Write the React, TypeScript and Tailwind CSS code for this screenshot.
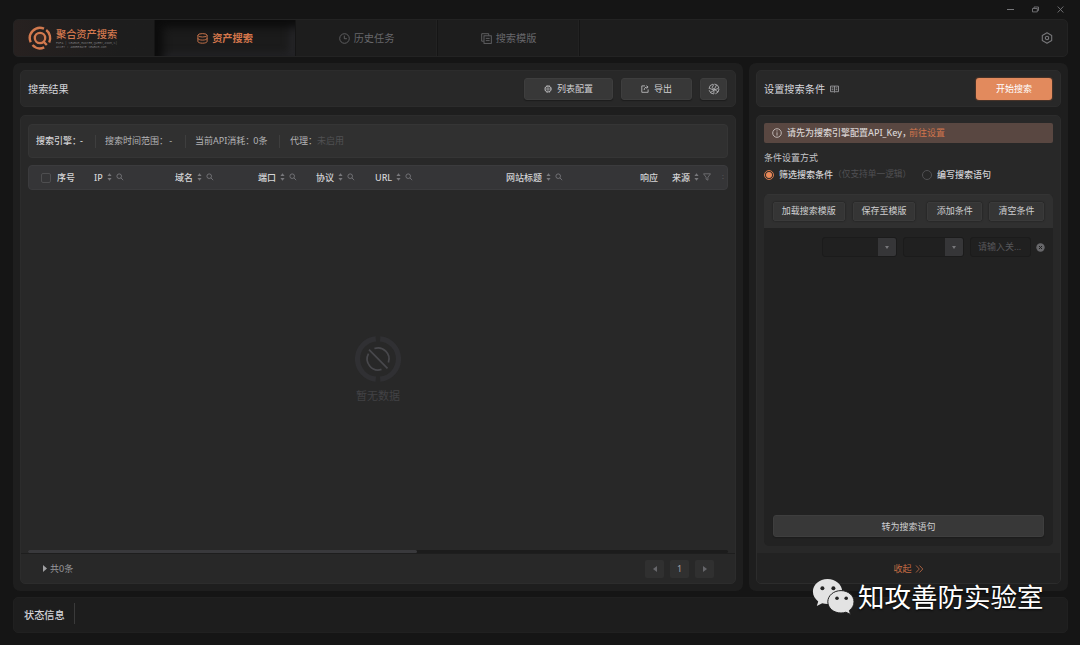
import React from 'react';

const sort = (
  <svg width="5" height="8" viewBox="0 0 5 8" fill="#77777b" className="-mt-px shrink-0">
    <path d="M2.5 0.2 4.6 3H.4zM2.5 7.8 4.6 5H.4z" />
  </svg>
);

const magnifier = (
  <svg width="8" height="8" viewBox="0 0 8 8" fill="none" stroke="#77777b" strokeWidth="0.9" className="-mt-px shrink-0">
    <circle cx="3.2" cy="3.2" r="2.3" />
    <path d="M4.9 4.9 7.2 7.1" />
  </svg>
);

const funnel = (
  <svg width="8" height="8" viewBox="0 0 8 8" fill="none" stroke="#77777b" strokeWidth="0.8" className="-mt-px shrink-0">
    <path d="M.5.8h7L4.9 4.2v3L3.1 6.2v-2z" />
  </svg>
);

function Logo() {
  return (
    <svg width="24" height="24" viewBox="0 0 24 24" fill="none" stroke="#d2794e" className="shrink-0">
      <circle cx="12" cy="12" r="5.2" strokeWidth="2.3" fill="#3a2822" />
      <path d="M15 15.2l3.8 3.8" strokeWidth="2.4" />
      <path d="M2.7 16.2A10.2 10.2 0 0 1 16 2.7" strokeWidth="2.4" />
      <path d="M18.2 4A10.2 10.2 0 0 1 21.2 16.4" strokeWidth="2.4" />
      <path d="M4.5 19A10.2 10.2 0 0 0 16.2 21.3" strokeWidth="2.4" />
    </svg>
  );
}

function Database() {
  return (
    <svg width="11" height="11" viewBox="0 0 11 11" fill="none" stroke="#d4794e" strokeWidth="0.9">
      <ellipse cx="5.5" cy="2.3" rx="4.6" ry="1.7" />
      <path d="M.9 2.3v6.2c0 .9 2 1.7 4.6 1.7s4.6-.8 4.6-1.7V2.3M.9 5.4c0 .9 2 1.7 4.6 1.7s4.6-.8 4.6-1.7" />
    </svg>
  );
}

function Clock() {
  return (
    <svg width="11" height="11" viewBox="0 0 11 11" fill="none" stroke="#646467" strokeWidth="0.9">
      <circle cx="5.5" cy="5.5" r="4.8" />
      <path d="M5.3 2.6v3.1h2.6" />
    </svg>
  );
}

function Template() {
  return (
    <svg width="11" height="11" viewBox="0 0 11 11" fill="none" stroke="#646467" strokeWidth="0.9">
      <path d="M2.8 8.2H.7V.7h7v1.8" />
      <rect x="3" y="2.8" width="7.3" height="7.6" />
      <path d="M4.8 5.4h3.8M4.8 7.6h3.8" />
    </svg>
  );
}

function HexGear({ size, color, width }: { size: number; color: string; width: number }) {
  return (
    <svg width={size} height={size} viewBox="0 0 12 12" fill="none" stroke={color} strokeWidth={width}>
      <path d="M6 .8 10.7 3.4v5.2L6 11.2 1.3 8.6V3.4z" strokeLinejoin="round" />
      <circle cx="6" cy="6" r="1.7" />
    </svg>
  );
}

function SmallGear() {
  return (
    <svg width="8" height="8" viewBox="0 0 8 8" fill="none" stroke="#b4b4b6">
      <circle cx="4" cy="4" r="3.1" strokeWidth="1.1" strokeDasharray="1.9 .53" />
      <circle cx="4" cy="4" r="2.8" strokeWidth="0.5" />
      <circle cx="4" cy="4" r="1.2" strokeWidth="0.8" />
    </svg>
  );
}

function ExportIcon() {
  return (
    <svg width="8" height="8" viewBox="0 0 8 8" fill="none" stroke="#b8b8ba" strokeWidth="0.9">
      <path d="M4 .9H.8v6.4h6.3V4.4" />
      <path d="M3.2 5c0-2 1-2.9 3.4-2.9M5.5.6l1.6 1.5-1.6 1.4" />
    </svg>
  );
}

function Globe() {
  return (
    <svg width="12" height="12" viewBox="0 0 12 12" fill="none" stroke="#b0b0b2" strokeWidth="0.9">
      <circle cx="6" cy="6" r="5" strokeDasharray="6.2 1.65" />
      <path d="M1.2 5.2 6 7.1l4.8-1.9M6 1.1l-2 3.6 6 4.2M8.5 2 5.9 7.1v3.8M2.6 9.5 6 7.1" />
    </svg>
  );
}

function Book() {
  return (
    <svg width="9" height="8" viewBox="0 0 9 8" fill="none" stroke="#a6a6a9" strokeWidth="0.8">
      <path d="M4.5 1.1H.5v5.6h3.3l.7.6.7-.6h3.3V1.1zM4.5 1.1v5.8M1.7 2.9h1.6M1.7 4.7h1.6M5.7 2.9h1.6M5.7 4.7h1.6" />
    </svg>
  );
}

function Tab({ icon, label, active = false }: { icon: React.ReactNode; label: string; active?: boolean }) {
  return (
    <div
      className={
        active
          ? 'flex w-[142px] items-center justify-center gap-1 border-x border-x-[#151515] bg-[#1b1b1b] text-[10.2px] font-bold text-[#d4764b] shadow-[inset_8px_7px_9px_#0c0c0c,inset_-6px_-3px_7px_#242427]'
          : 'flex w-[142px] items-center justify-center gap-1 border-r border-r-[#151515] text-[10.2px] text-[#67676b] shadow-[inset_-1px_0_0_#222222]'
      }
    >
      {icon}
      <span className="pt-[2px]">{label}</span>
    </div>
  );
}

type Column = { label: string; width: string; tools?: 'search' | 'filter' };

const columns: Column[] = [
  { label: '序号', width: 'w-[37px]' },
  { label: 'IP', width: 'w-[81px]', tools: 'search' },
  { label: '域名', width: 'w-[83px]', tools: 'search' },
  { label: '端口', width: 'w-[58px]', tools: 'search' },
  { label: '协议', width: 'w-[59px]', tools: 'search' },
  { label: 'URL', width: 'w-[131px]', tools: 'search' },
  { label: '网站标题', width: 'w-[134px]', tools: 'search' },
  { label: '响应', width: 'w-[32px]' },
  { label: '来源', width: 'w-[50px]', tools: 'filter' },
];

const card = 'rounded-[5px] border border-[#2c2c2c] bg-[#282828]';
const button = 'flex items-center justify-center rounded-[3px] border border-[#3e3e3e] bg-[#383838] text-[9px] text-[#d0d0d2] shadow-[0_1px_1px_#1c1c1c]';

function Divider() {
  return <div className="h-[13px] w-px shrink-0 bg-[#3e3e3e]" />;
}

function Results() {
  return (
    <section className="flex w-[730px] flex-col gap-2 rounded-[7px] bg-[#1e1e1e] p-[7px]">
      <div className={`${card} flex h-[37px] shrink-0 items-center pr-2 pl-[7px]`}>
        <h2 className="flex-1 pt-[2px] text-[10.2px] text-[#d6d6dc]">搜索结果</h2>
        <div className="flex gap-2">
          <button className={`${button} h-[22px] w-[89px] gap-[5px]`}><SmallGear />列表配置</button>
          <button className={`${button} h-[22px] w-[71px] gap-[5px]`}><ExportIcon />导出</button>
          <button className={`${button} h-[22px] w-[27px]`}><Globe /></button>
        </div>
      </div>

      <div className={`${card} flex flex-1 flex-col`}>
        <div className="mx-[7px] mt-2 flex h-[34px] items-center rounded-[4px] border border-[#353535] bg-[#303030] pl-[7px] text-[9px] whitespace-nowrap text-[#b4b4b6]">
          <span className="w-[59px] font-medium text-[#d2d2d4]">搜索引擎：<span className="-ml-px">-</span></span>
          <Divider />
          <span className="w-[89px] pl-[9px]">搜索时间范围： <span className="-ml-px">-</span></span>
          <Divider />
          <span className="flex w-[93px] pl-[9px]">当前API消耗：<span className="-ml-px">0条</span></span>
          <Divider />
          <span className="flex pl-[10px]">代理：<span className="text-[#515153]">未启用</span></span>
        </div>

        <div className="mx-[7px] mt-[7px] flex h-[25px] items-center rounded-[4px] border border-[#3b3b3d] bg-[#353537] pl-3 text-[9px] font-medium whitespace-nowrap text-[#d4d4d6]">
          <span className="mr-[6px] size-[10px] shrink-0 rounded-[2px] border border-[#4e4e50]" />
          {columns.map((c) => (
            <span key={c.label} className={`${c.width} flex shrink-0 items-center gap-1`}>
              {c.label}
              {c.tools && sort}
              {c.tools === 'search' && magnifier}
              {c.tools === 'filter' && funnel}
            </span>
          ))}
          <span className="text-[7px] text-[#5a5a5c]">:</span>
        </div>

        <div className="flex flex-1 flex-col items-center pt-[146px]">
          <svg width="46" height="46" viewBox="0 0 46 46" fill="none">
            <path d="M20.8 2.8a20.3 20.3 0 0 0 0 40.4M25.2 2.8a20.3 20.3 0 0 1 0 40.4" stroke="#303033" strokeWidth="5.2" />
            <path d="M19.4 12.5A11 11 0 0 1 33.4 26.4M13.5 17.7A11 11 0 0 0 26.5 33.4M14 13.6 32.5 32.3" stroke="#48484c" strokeWidth="1.7" />
          </svg>
          <span className="mt-[6px] text-[11px] leading-4 text-[#424245]">暂无数据</span>
        </div>

        <div className="mx-[7px] h-[3px] shrink-0 rounded-full bg-[#1c1c1c]">
          <div className="h-[3px] w-[389px] rounded-full bg-[#39393c]" />
        </div>
        <footer className="flex h-[30px] shrink-0 items-center border-t border-[#1e1e1e] pr-[21px] pl-[22px] text-[9px] text-[#97979a]">
          <svg width="4" height="7" viewBox="0 0 4 7" className="mr-[3px] fill-[#a0a0a2]"><path d="M0 0 4 3.5 0 7z" /></svg>
          <span className="flex-1 pt-px">共0条</span>
          <div className="flex gap-[6px]">
            <span className="flex h-[18px] w-[19px] items-center justify-center rounded-[2px] bg-[#303030]">
              <svg width="4" height="6" viewBox="0 0 4 6" fill="#66666a"><path d="M4 0v6L0 3z" /></svg>
            </span>
            <span className="flex h-[18px] w-[19px] items-center justify-center rounded-[2px] bg-[#303030] pt-px text-[9px] text-[#a0a0a8]">1</span>
            <span className="flex h-[18px] w-[19px] items-center justify-center rounded-[2px] bg-[#303030]">
              <svg width="4" height="6" viewBox="0 0 4 6" fill="#66666a"><path d="M0 0v6l4-3z" /></svg>
            </span>
          </div>
        </footer>
      </div>
    </section>
  );
}

function Select({ width }: { width: string }) {
  return (
    <div className={`${width} flex h-5 overflow-hidden rounded-[3px] border border-[#1b1b1b] bg-[#202020]`}>
      <span className="flex-1" />
      <span className="flex w-[18px] items-center justify-center bg-[#363638]">
        <svg width="4" height="3" viewBox="0 0 4 3" fill="#77777a"><path d="M0 0h4L2 3z" /></svg>
      </span>
    </div>
  );
}

function Conditions() {
  const small = 'flex h-[19px] items-center justify-center rounded-[2px] border border-[#3a3a3a] bg-[#353535] shadow-[0_0_2px_#1a1a1a]';
  return (
    <section className="flex w-[319px] flex-col gap-2 rounded-[7px] bg-[#1e1e1e] p-[7px]">
      <div className={`${card} flex h-[37px] shrink-0 items-center pr-2 pl-[7px]`}>
        <h2 className="pt-[2px] text-[10.2px] text-[#d6d6dc]">设置搜索条件</h2>
        <span className="ml-[5px] flex-1"><Book /></span>
        <button className="h-[22px] w-[76px] rounded-[3px] bg-[#e28a5d] pt-px text-[9px] text-white shadow-[0_0_1px_1px_#4a3429]">开始搜索</button>
      </div>

      <div className={`${card} flex flex-1 flex-col overflow-hidden`}>
        <div className="mx-[7px] mt-[7px] flex h-5 shrink-0 items-center rounded-[2px] bg-[#594741] pl-2 text-[9px] font-medium text-[#d8d4d3]">
          <svg width="10" height="10" viewBox="0 0 10 10" fill="none" stroke="#c9c2bf" strokeWidth="0.9" className="mr-[5px]">
            <circle cx="5" cy="5" r="4.3" /><path d="M5 2.3v1.2M5 4.3v3.3" />
          </svg>
          请先为搜索引擎配置API_Key，
          <span className="-ml-[2px] font-normal text-[#d0754c]">前往设置</span>
        </div>
        <p className="mt-2 ml-[7px] text-[9px] leading-[14px] text-[#c6c6c8]">条件设置方式</p>
        <div className="mt-[3px] ml-[7px] flex h-[13px] items-center text-[9px] whitespace-nowrap text-[#d2d2d4]">
          <span className="mr-[5px] flex size-[10px] items-center justify-center rounded-full border border-[#d47a4f]">
            <span className="size-[6px] rounded-full bg-[#e98a5a]" />
          </span>
          <span className="w-[54px] font-medium">筛选搜索条件</span>
          <span className="w-[89px] text-[8.7px] text-[#505053]">（仅支持单一逻辑）</span>
          <span className="mr-[5px] size-[10px] rounded-full border border-[#505052]" />
          <span className="font-medium">编写搜索语句</span>
        </div>

        <div className="mx-[7px] mt-[13px] flex h-[352px] shrink-0 flex-col overflow-hidden rounded-[5px] bg-[#222222]">
          <div className="flex h-[34px] shrink-0 items-center border-t border-[#343434] bg-[#303030] px-[9px] pb-px text-[9px] text-[#cfcfd1]">
            <button className={`${small} w-[72px]`}>加载搜索模版</button>
            <button className={`${small} ml-2 w-[63px]`}>保存至模版</button>
            <button className={`${small} ml-[12px] w-[55px]`}>添加条件</button>
            <button className={`${small} ml-[7px] w-[55px]`}>清空条件</button>
          </div>
          <div className="flex items-center justify-end pt-[9px] pr-2">
            <Select width="w-[75px]" />
            <span className="w-[6px]" />
            <Select width="w-[61px]" />
            <span className="ml-[6px] flex h-5 w-[61px] items-center rounded-[3px] border border-[#1b1b1b] bg-[#202020] pl-[7px] text-[9px] text-[#57575a]">请输入关...</span>
            <svg width="9" height="9" viewBox="0 0 9 9" className="ml-[5px]">
              <circle cx="4.5" cy="4.5" r="4.2" fill="#67676a" />
              <path d="m3 3 3 3M6 3 3 6" stroke="#202020" />
            </svg>
          </div>
          <button className={`${button} mx-[9px] mt-auto mb-[9px] h-[22px] pt-px`}>转为搜索语句</button>
        </div>

        <footer className="mt-auto flex h-[30px] shrink-0 items-center justify-center gap-[3px] bg-[#222222] pt-[2px] text-[9px] text-[#c46b43]">
          收起
          <svg width="9" height="8" viewBox="0 0 9 8" fill="none" stroke="#b06443" strokeWidth="0.9" className="-mt-px"><path d="m1 .5 3.3 3.5L1 7.5M4.5.5 7.8 4 4.5 7.5" /></svg>
        </footer>
      </div>
    </section>
  );
}

export default function App() {
  return (
    <div className="relative flex h-[645px] w-[1080px] flex-col overflow-hidden bg-[#151515] pr-3 pl-[13px] font-['Noto_Sans','Noto_Sans_CJK_SC',sans-serif]">
      <div className="flex h-[19px] shrink-0 items-center justify-end gap-[18px] pr-1">
        <svg width="7" height="7" viewBox="0 0 7 7" stroke="#77777a"><path d="M0 3.5h7" /></svg>
        <svg width="7" height="7" viewBox="0 0 7 7" fill="none" stroke="#77777a" strokeWidth="0.9"><path d="M2 2V1h4.5v3.5h-1M.5 2.5h4.8v3.4H.5z" /></svg>
        <svg width="7" height="7" viewBox="0 0 7 7" stroke="#77777a" strokeWidth="0.9"><path d="m.7.5 5.6 6M6.3.5l-5.6 6" /></svg>
      </div>

      <header className="flex h-[38px] shrink-0 overflow-hidden rounded-[5px] border border-[#232323] bg-[#1d1d1d]">
        <div className="flex w-[140px] items-center gap-[4px] bg-linear-to-r from-[#272120] to-[#1d1d1d] to-75% pl-[14px]">
          <Logo />
          <div className="flex flex-col">
            <span className="text-[10.2px] leading-[13px] font-medium text-[#d4794f]">聚合资产搜索</span>
            <span className="mt-px font-['Liberation_Mono',monospace] text-[3px] leading-[4px] whitespace-nowrap text-[#77777a]">FOFA | SEARCH,HUNTER,QUERY,ZOOM,S|</span>
            <span className="font-['Liberation_Mono',monospace] text-[3px] leading-[3px] whitespace-nowrap text-[#77777a]">ASSET : AGGREGATE SEARCH.COM</span>
          </div>
        </div>
        <Tab icon={<Database />} label="资产搜索" active />
        <Tab icon={<Clock />} label="历史任务" />
        <Tab icon={<Template />} label="搜索模版" />
        <div className="flex flex-1 items-center justify-end pr-[14px]"><HexGear size={12} color="#77777a" width={1.1} /></div>
      </header>

      <main className="mt-[6px] flex h-[528px] shrink-0 gap-[6px]">
        <Results />
        <Conditions />
      </main>

      <div className="mt-[6px] flex h-[36px] shrink-0 items-center rounded-[5px] border border-[#202020] bg-[#1d1d1d] pl-[10px]">
        <span className="w-[50px] pt-[2px] text-[10.2px] font-medium text-[#d4d4d8]">状态信息</span>
        <span className="mb-[3px] h-[21px] w-px bg-[#3a3a3a]" />
      </div>

      <div className="absolute top-[576px] left-[812px] flex items-center gap-[4px] whitespace-nowrap text-white">
        <svg width="42" height="37" viewBox="0 0 42 37" className="shrink-0">
          <path d="M15.5 1C7.3 1 .9 6.6.9 13.6c0 4 2 7.5 5.3 9.8L4.8 28l5.4-2.8c1.7.5 3.5.8 5.3.8 8.2 0 14.7-5.5 14.7-12.4S23.7 1 15.5 1z" fill="#e3e3e3" />
          <path d="M29 12.6c-7.4 0-13.2 5-13.2 11.2S21.6 35 29 35c1.8 0 3.4-.3 4.9-.8l4.7 2.2-1.2-4c2.9-2.1 4.6-5 4.6-8.6 0-6.2-5.8-11.2-13-11.2z" fill="#e3e3e3" stroke="#222222" strokeWidth="1" />
          <g fill="#242424"><circle cx="10.4" cy="10.2" r="2" /><circle cx="21.4" cy="10.2" r="2" /><circle cx="25" cy="20.3" r="1.8" /><circle cx="34.2" cy="20.3" r="1.8" /></g>
        </svg>
        <span className="pt-px text-[26.5px] leading-[40px] [text-shadow:0_1px_2px_#000000]">知攻善防实验室</span>
      </div>
    </div>
  );
}
